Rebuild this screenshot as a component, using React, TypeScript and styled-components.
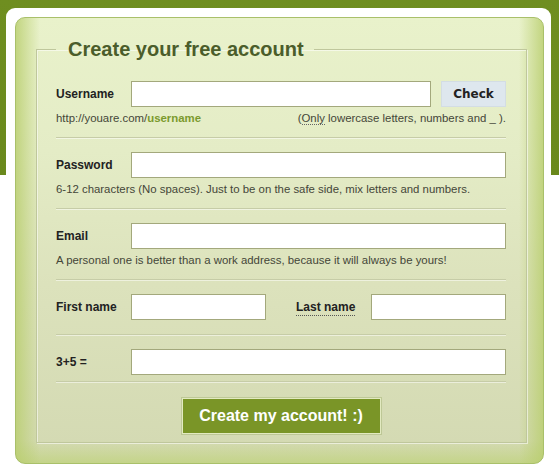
import React from 'react';
import styled, { createGlobalStyle } from 'styled-components';

const GlobalStyle = createGlobalStyle`
    html, body {
        margin: 0;
        padding: 0;
    }
    body {
        background: linear-gradient(#6f8e20 0, #6a891c 175px, #ffffff 175px);
        font-family: "Liberation Sans", Arial, sans-serif;
        color: #222;
        min-height: 475px;
    }
`;

const Page = styled.div`
    padding: 8px 8px 0 6px;
`;

const WhiteCard = styled.div`
    width: 545px;
    box-sizing: border-box;
    background: #fff;
    border-radius: 9px 9px 0 0;
    padding: 9px 7px 12px 9px;
`;

const Panel = styled.div`
    box-sizing: border-box;
    border: 1px solid #a9c06a;
    border-radius: 10px;
    padding: 19px 16px 20px 20px;
    background:
        linear-gradient(to right, rgba(185, 206, 110, 0.8) 0, rgba(185, 206, 110, 0) 24px, rgba(185, 206, 110, 0) calc(100% - 24px), rgba(185, 206, 110, 0.8) 100%),
        linear-gradient(to bottom, rgba(190, 210, 120, 0) calc(100% - 22px), rgba(190, 210, 120, 0.7) 100%),
        linear-gradient(#e9f2cb 0, #e4ecc6 30%, #dce2bc 60%, #d3d9b2 100%);
`;

const Fieldset = styled.fieldset`
    margin: 0;
    min-width: 0;
    padding: 0 20px 8px 19px;
    border: 1px solid #bfc79c;
    box-shadow: 1px 1px 0 rgba(255, 255, 255, 0.55), inset 1px 1px 0 rgba(255, 255, 255, 0.55);
`;

const Legend = styled.legend`
    padding: 0 10px 0 12px;
    font-size: 20px;
    line-height: 24px;
    font-weight: bold;
    color: #4b5d2b;
`;

const Section = styled.div<{ $bottom?: number; $top?: number }>`
    padding: ${(p) => p.$top ?? 14}px 0 ${(p) => p.$bottom ?? 12}px;
    border-bottom: 1px solid #c6cca7;
    box-shadow: 0 1px 0 rgba(255, 255, 255, 0.5);
`;

const Row = styled.div`
    display: flex;
    align-items: center;
    height: 26px;
`;

const Label = styled.label<{ $width?: number; $gap?: number }>`
    width: ${(p) => p.$width ?? 75}px;
    margin-left: ${(p) => p.$gap ?? 0}px;
    flex-shrink: 0;
    font-size: 12px;
    font-weight: bold;
    color: #222;
`;

const Abbr = styled.span`
    border-bottom: 1px dotted #555;
    padding-bottom: 1px;
`;

const Input = styled.input<{ $width?: number }>`
    box-sizing: border-box;
    height: 26px;
    min-width: 0;
    width: ${(p) => (p.$width ? `${p.$width}px` : '0')};
    flex: ${(p) => (p.$width ? '0 0 auto' : '1 1 0')};
    border: 1px solid #a3a87c;
    background: #fff;
    margin: 0;
    padding: 0 6px;
    font-family: inherit;
    font-size: 13px;
    outline: none;
`;

const CheckButton = styled.button`
    box-sizing: border-box;
    flex-shrink: 0;
    margin-left: 10px;
    width: 65px;
    height: 26px;
    border: 1px solid #d3dde4;
    background: #dee7ee;
    font-family: "DejaVu Sans", "Liberation Sans", sans-serif;
    font-size: 12px;
    font-weight: bold;
    color: #222;
    padding: 0;
`;

const Hint = styled.div`
    display: flex;
    justify-content: space-between;
    margin-top: 4px;
    font-size: 11.4px;
    line-height: 14px;
    color: #444638;
    white-space: nowrap;
`;

const Green = styled.b`
    color: #7b9a2e;
`;

const Dotted = styled.span`
    border-bottom: 1px dotted #666;
`;

const Footer = styled.div`
    display: flex;
    justify-content: center;
    padding: 16px 0 0;
`;

const SubmitButton = styled.button`
    box-sizing: border-box;
    width: 199px;
    height: 36px;
    background: #7a9527;
    border: 1px solid #e2eac0;
    box-shadow: 0 0 0 1px rgba(120, 140, 60, 0.25);
    color: #fff;
    font-family: "Liberation Sans", Arial, sans-serif;
    font-size: 16px;
    font-weight: bold;
    padding: 0;
`;

const App: React.FC = () => {
    return (
        <>
            <GlobalStyle />
            <Page>
                <WhiteCard>
                    <Panel>
                        <Fieldset>
                            <Legend>Create your free account</Legend>

                            {/* Username */}
                            <Section $top={20}>
                                <Row>
                                    <Label>Username</Label>
                                    <Input $width={300} />
                                    <CheckButton>Check</CheckButton>
                                </Row>
                                <Hint>
                                    <span>
                                        http://youare.com/<Green>username</Green>
                                    </span>
                                    <span>
                                        (<Dotted>Only</Dotted> lowercase letters, numbers and _ ).
                                    </span>
                                </Hint>
                            </Section>

                            {/* Password */}
                            <Section>
                                <Row>
                                    <Label>Password</Label>
                                    <Input type="password" />
                                </Row>
                                <Hint>
                                    <span>6-12 characters (No spaces). Just to be on the safe side, mix letters and numbers.</span>
                                </Hint>
                            </Section>

                            {/* Email */}
                            <Section>
                                <Row>
                                    <Label>Email</Label>
                                    <Input />
                                </Row>
                                <Hint>
                                    <span>A personal one is better than a work address, because it will always be yours!</span>
                                </Hint>
                            </Section>

                            {/* Names */}
                            <Section $bottom={14}>
                                <Row>
                                    <Label>First name</Label>
                                    <Input $width={135} />
                                    <Label $gap={30}>
                                        <Abbr>Last name</Abbr>
                                    </Label>
                                    <Input />
                                </Row>
                            </Section>

                            {/* Captcha */}
                            <Section $bottom={6}>
                                <Row>
                                    <Label>3+5 =</Label>
                                    <Input />
                                </Row>
                            </Section>

                            <Footer>
                                <SubmitButton>Create my account! :)</SubmitButton>
                            </Footer>
                        </Fieldset>
                    </Panel>
                </WhiteCard>
            </Page>
        </>
    );
};

export default App;
